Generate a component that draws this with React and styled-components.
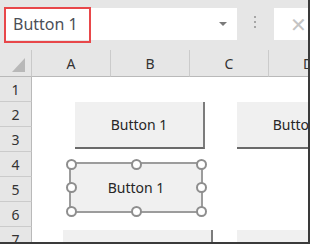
import React from 'react';
import styled, { createGlobalStyle } from 'styled-components';

const GlobalStyle = createGlobalStyle`
  html, body {
    margin: 0;
    padding: 0;
    background: #ffffff;
  }
  body {
    font-family: 'Noto Sans', 'Open Sans', sans-serif;
  }
`;

const Frame = styled.div`
  position: relative;
  width: 310px;
  height: 244px;
  box-sizing: border-box;
  overflow: hidden;
  background: #ffffff;
  border-right: 2px solid #3a3a3a;
  border-bottom: 2px solid #3a3a3a;
`;

const Toolbar = styled.div`
  display: flex;
  align-items: flex-start;
  height: 50px;
  box-sizing: border-box;
  padding: 8px 0 0 5px;
  background: #e6e6e6;
`;

const NameInput = styled.div`
  position: relative;
  display: flex;
  align-items: center;
  justify-content: space-between;
  width: 232px;
  height: 32px;
  box-sizing: border-box;
  padding: 0 10px 0 8px;
  background: #ffffff;
`;

const NameText = styled.span`
  font-size: 16px;
  color: #4b4f57;
`;

const Highlight = styled.div`
  position: absolute;
  left: -1px;
  top: -1px;
  width: 87px;
  height: 36px;
  box-sizing: border-box;
  border: 2px solid #e8474a;
`;

const DropArrow = styled.span`
  width: 0;
  height: 0;
  border-left: 4px solid transparent;
  border-right: 4px solid transparent;
  border-top: 4px solid #7a7a7a;
`;

const Dots = styled.div`
  display: flex;
  flex-direction: column;
  gap: 3px;
  margin: 8px 0 0 17px;
  span {
    width: 2px;
    height: 2px;
    background: #a6a6a6;
  }
`;

const FormulaInput = styled.div`
  display: flex;
  align-items: center;
  flex: 1;
  height: 32px;
  margin-left: 18px;
  padding-left: 16px;
  background: #ffffff;
  color: #c4c4c4;
  font-size: 20px;
  font-weight: 300;
`;

const Sheet = styled.div`
  display: grid;
  grid-template-columns: 32px repeat(4, 79px);
  grid-template-rows: 27px repeat(7, 25px);
  background: #e6e6e6;
`;

const Corner = styled.div`
  position: relative;
  border-right: 1px solid #c9c9c9;
  border-bottom: 1px solid #b9b9b9;
  &::after {
    content: '';
    position: absolute;
    right: 6px;
    bottom: 4px;
    width: 0;
    height: 0;
    border-left: 13px solid transparent;
    border-bottom: 14px solid #b8b8b8;
  }
`;

const ColHead = styled.div`
  display: flex;
  align-items: center;
  justify-content: center;
  border-right: 1px solid #cbcbcb;
  border-bottom: 1px solid #b9b9b9;
  font-size: 14px;
  color: #333333;
`;

const RowHead = styled.div`
  grid-column: 1;
  display: flex;
  align-items: center;
  justify-content: center;
  border-right: 1px solid #b9b9b9;
  border-bottom: 1px solid #cbcbcb;
  font-size: 14px;
  color: #333333;
`;

const Canvas = styled.div`
  position: relative;
  grid-column: 2 / -1;
  grid-row: 2 / -1;
  background: #ffffff;
`;

const FormButton = styled.div`
  position: absolute;
  left: ${p => p.$x}px;
  top: ${p => p.$y}px;
  width: ${p => p.$w}px;
  height: 47px;
  box-sizing: border-box;
  display: flex;
  align-items: center;
  justify-content: center;
  background: #f0f0f0;
  border-right: 2px solid #7c7c7c;
  border-bottom: 2px solid #6a6a6a;
  font-size: 14px;
  color: #262626;
  white-space: nowrap;
`;

const Selected = styled.div`
  position: absolute;
  left: ${p => p.$x}px;
  top: ${p => p.$y}px;
  width: 134px;
  height: 51px;
  box-sizing: border-box;
  display: flex;
  align-items: center;
  justify-content: center;
  background: #f0f0f0;
  border: 2px solid #9c9c9c;
  font-size: 14px;
  color: #262626;
`;

const Handle = styled.span`
  position: absolute;
  left: ${p => p.$x}%;
  top: ${p => p.$y}%;
  width: 11px;
  height: 11px;
  box-sizing: border-box;
  margin: -5.5px 0 0 -5.5px;
  border: 2px solid #8e8e8e;
  border-radius: 50%;
  background: #ffffff;
`;

const handles = [
  [0, 0], [50, 0], [100, 0],
  [0, 50], [100, 50],
  [0, 100], [50, 100], [100, 100],
];

export default function App() {
  return (
    <Frame>
      <GlobalStyle />
      <Toolbar>
        <NameInput>
          <NameText>Button 1</NameText>
          <DropArrow />
          <Highlight />
        </NameInput>
        <Dots><span /><span /><span /></Dots>
        <FormulaInput>✕</FormulaInput>
      </Toolbar>
      <Sheet>
        <Corner />
        {['A', 'B', 'C', 'D'].map(c => <ColHead key={c}>{c}</ColHead>)}
        {[1, 2, 3, 4, 5, 6, 7].map(n => <RowHead key={n}>{n}</RowHead>)}
        <Canvas>
          <FormButton $x={43} $y={25} $w={130}>Button 1</FormButton>
          <FormButton $x={205} $y={25} $w={130}>Button 1</FormButton>
          <Selected $x={37} $y={85}>
            Button 1
            {handles.map(([x, y]) => <Handle key={x + '-' + y} $x={x} $y={y} />)}
          </Selected>
          <FormButton $x={31} $y={153} $w={150}>Button 1</FormButton>
          <FormButton $x={205} $y={153} $w={130}>Button 1</FormButton>
        </Canvas>
      </Sheet>
    </Frame>
  );
}
